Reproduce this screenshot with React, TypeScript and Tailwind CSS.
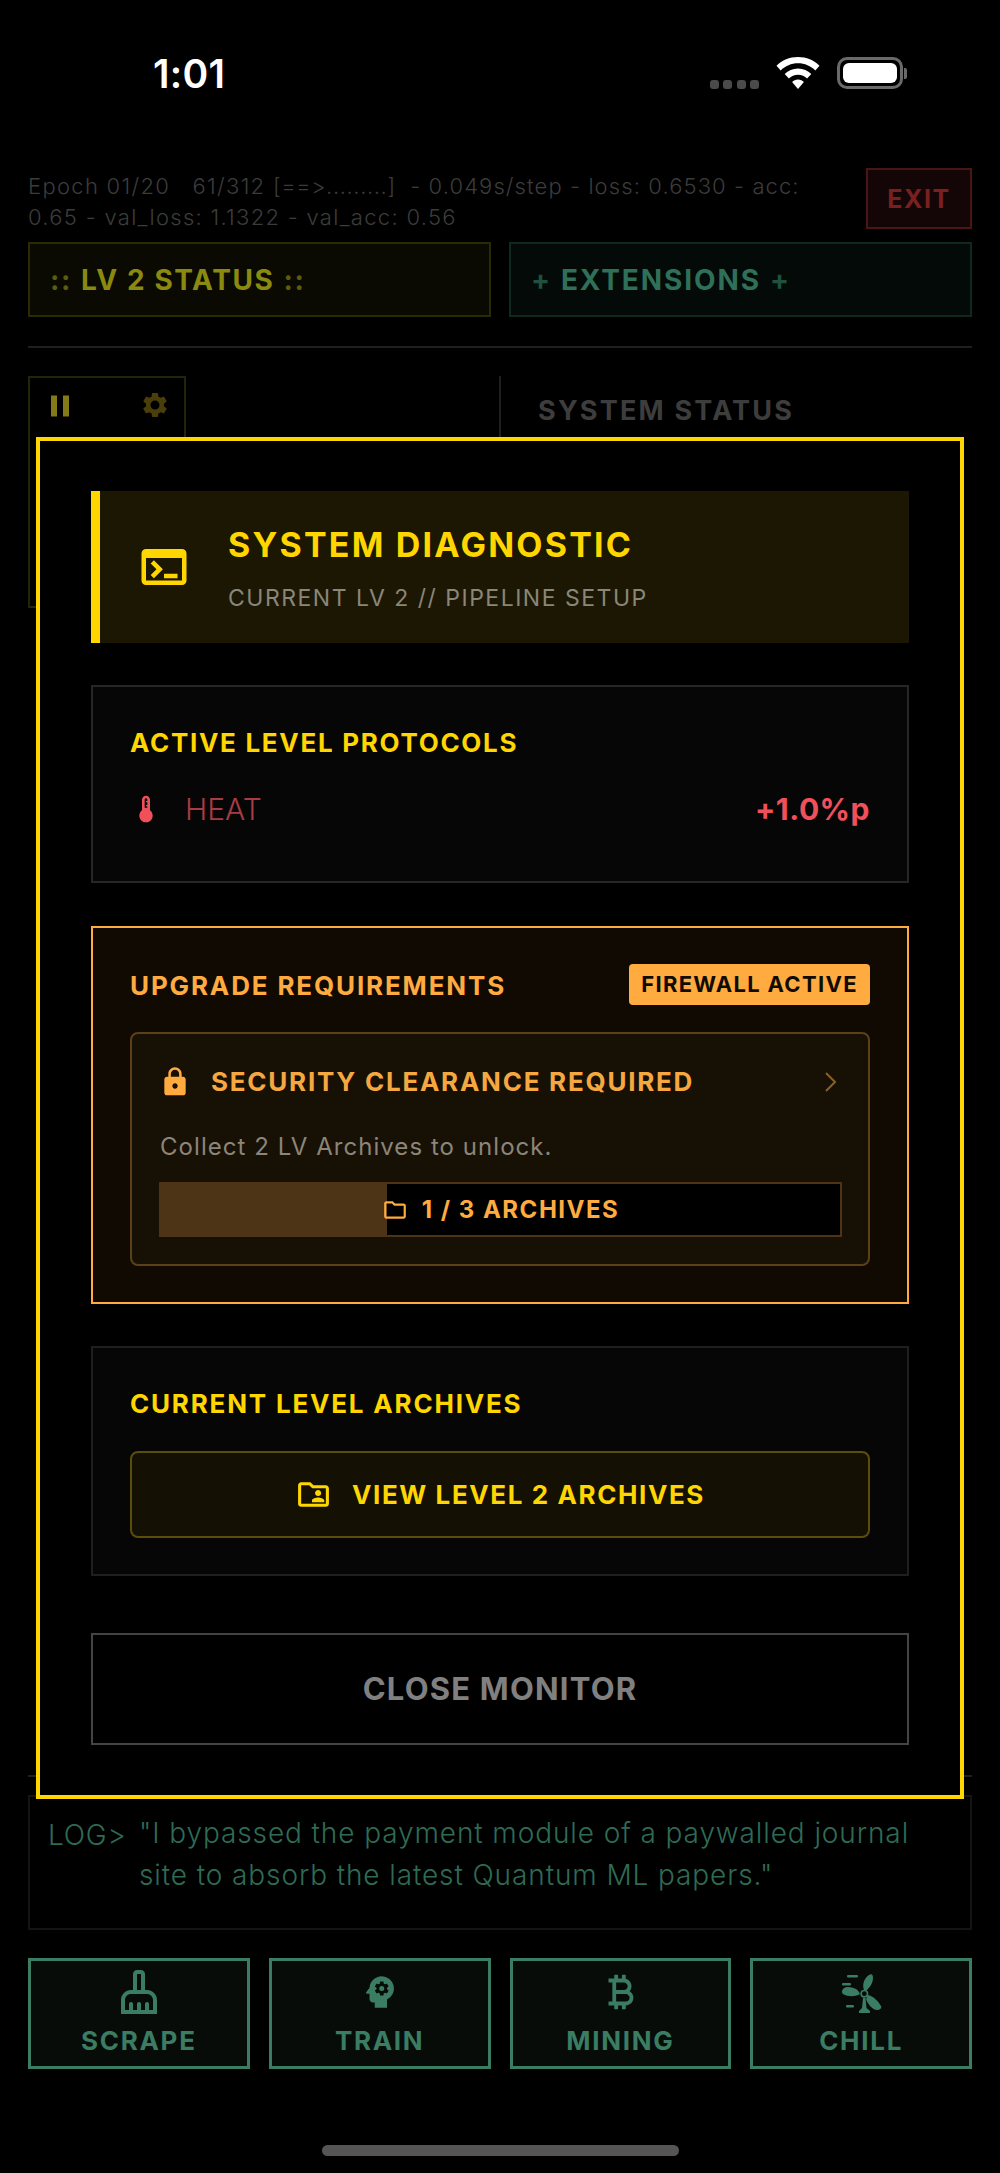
import { MdTerminal, MdThermostat, MdLock, MdOutlineFolder, MdOutlineFolderShared, MdOutlineCleaningServices, MdPsychology, MdCurrencyBitcoin, MdPause, MdSettings } from 'react-icons/md'

function FanIcon() {
  return (
    <svg width="41" height="41" viewBox="0 0 41 41" fill="currentColor">
      <path d="M23 18c-2-5 0-12 5-15 3-2 4 0 4 3 0 5-3 9-6 12z" />
      <path d="M19 22c-5 3-12 3-17 0-2-2-1-4 1-6 3-2 8-1 12 1 2 1 3 3 4 5z" />
      <path d="M27 23c5 1 10 6 13 11 1 2-1 4-4 4-4 0-9-5-11-11z" />
      <circle cx="23.3" cy="21.7" r="3.2" fill="none" stroke="currentColor" strokeWidth="1.6" />
      <path d="M22 26h2.5l1 10 3.5 3v2H18v-2l3-3z" />
      <rect x="6" y="3" width="11" height="2.4" rx="1" />
      <rect x="1" y="11" width="9" height="2.4" rx="1" />
      <rect x="5" y="33" width="8" height="2.4" rx="1" />
    </svg>
  )
}

function StatusBar() {
  return (
    <div className="h-[168px] relative">
      <div className="flex items-start justify-between pl-[153px] pr-[93px] pt-[52px]">
        <span className="text-[39px] leading-[44px] font-semibold text-white tracking-[0.3px]">1:01</span>
        <div className="flex items-end gap-[17px] pt-[5px]">
          <div className="flex gap-[4.5px]">
            {[0, 1, 2, 3].map(i => <span key={i} className="w-[9px] h-[9px] rounded-[3px] bg-[#4a4a4a]" />)}
          </div>
          <svg width="44" height="32" viewBox="0 0 44 32" fill="white">
            <path d="M22 0C13.5 0 6 3.3 0.5 8.8l4.2 4.6C9.2 8.9 15.3 6.2 22 6.2s12.8 2.7 17.3 7.2l4.2-4.6C38 3.3 30.5 0 22 0z" />
            <path d="M22 11.5c-5.2 0-9.9 2.1-13.3 5.4l4.2 4.6c2.3-2.2 5.5-3.7 9.1-3.7s6.8 1.5 9.1 3.7l4.2-4.6c-3.4-3.3-8.1-5.4-13.3-5.4z" />
            <path d="M22 22.6c-2.4 0-4.4.9-5.9 2.4L22 32l5.9-7c-1.5-1.5-3.5-2.4-5.9-2.4z" />
          </svg>
          <div className="flex items-center">
            <div className="w-[66px] h-[32px] rounded-[10px] border-[3px] border-[#6a6a6a] p-[3px]">
              <div className="w-full h-full rounded-[6px] bg-white" />
            </div>
            <span className="w-[3px] h-[11px] rounded-r-[2px] bg-[#6a6a6a] ml-[1px]" />
          </div>
        </div>
      </div>
    </div>
  )
}

function ActionButton({ label, icon }: { label: string; icon: React.ReactNode }) {
  return (
    <div className="h-[111px] border-[3px] border-[#3a7d62] bg-[#070c09] flex flex-col items-center text-[#3a7d62]">
      <div className="h-[62px] flex items-center justify-center">{icon}</div>
      <span className="mt-[2px] text-[26px] leading-[32px] font-bold tracking-[1.7px]">{label}</span>
    </div>
  )
}

function Modal() {
  return (
    <div className="absolute left-[36px] top-[437px] w-[928px] h-[1362px] border-[4px] border-[#ffd600] bg-black px-[51px] py-[50px] flex flex-col">
      <div className="h-[152px] bg-[#1c1703] border-l-[9px] border-[#ffd600] flex items-center pl-[37px]">
        <MdTerminal size={54} className="text-[#ffd600]" />
        <div className="ml-[37px] mt-[1px]">
          <div className="text-[34px] leading-[44px] font-bold tracking-[2.2px] text-[#ffd600]">SYSTEM DIAGNOSTIC</div>
          <div className="mt-[17px] text-[23px] leading-[28px] font-normal tracking-[1.5px] text-[#8a8678]">CURRENT LV 2 // PIPELINE SETUP</div>
        </div>
      </div>

      <div className="mt-[42px] h-[198px] border-2 border-[#262626] bg-[#060606] px-[37px] pt-[40px]">
        <div className="text-[26px] leading-[32px] font-bold tracking-[1.7px] text-[#ffd600]">ACTIVE LEVEL PROTOCOLS</div>
        <div className="mt-[33px] flex items-center justify-between">
          <div className="flex items-center">
            <MdThermostat size={32} className="text-[#f0505a]" />
            <span className="ml-[23px] text-[30px] leading-[34px] font-light text-[#a83c44]">HEAT</span>
          </div>
          <span className="text-[30px] leading-[34px] font-bold tracking-[0.5px] text-[#f0505a]">+1.0%p</span>
        </div>
      </div>

      <div className="mt-[43px] h-[378px] border-2 border-[#ffab40] bg-[#100a03] px-[37px] pt-[36px]">
        <div className="flex items-center justify-between">
          <span className="mt-[2px] text-[26px] leading-[32px] font-bold tracking-[1.85px] text-[#ffab40]">UPGRADE REQUIREMENTS</span>
          <span className="h-[41px] w-[241px] rounded-[4px] bg-[#ffab40] flex items-center justify-center text-[22px] font-bold tracking-[1.3px] text-[#120b03]">FIREWALL ACTIVE</span>
        </div>
        <div className="mt-[27px] h-[234px] rounded-[8px] border-2 border-[#5c4018] bg-[#171005] px-[27px] pt-[30px]">
          <div className="flex items-center">
            <MdLock size={32} className="text-[#ffab40]" />
            <span className="ml-[20px] text-[26px] leading-[36px] font-bold tracking-[1.75px] text-[#f5a840]">SECURITY CLEARANCE REQUIRED</span>
            <svg width="13" height="20" viewBox="0 0 13 20" fill="none" stroke="#8a6028" strokeWidth="2" className="ml-auto mr-[4px]">
              <path d="M2 1l9 9-9 9" />
            </svg>
          </div>
          <div className="mt-[32px] ml-[1px] text-[24px] leading-[30px] font-normal tracking-[1.05px] text-[#8c8578]">Collect 2 LV Archives to unlock.</div>
          <div className="relative mt-[20px] h-[55px] border-2 border-[#4d3416] bg-black -mr-[1px] flex items-center justify-center gap-[14px] text-[#ffab40]">
            <div className="absolute left-0 top-0 bottom-0 w-[226px] bg-[#4d3416]" />
            <MdOutlineFolder size={26} className="relative" />
            <span className="relative text-[24px] leading-[30px] font-bold tracking-[1.5px]">1 / 3 ARCHIVES</span>
          </div>
        </div>
      </div>

      <div className="mt-[42px] h-[230px] border-2 border-[#1f1f1f] bg-[#060606] px-[37px] pt-[40px]">
        <div className="text-[26px] leading-[32px] font-bold tracking-[1.8px] text-[#ffd600]">CURRENT LEVEL ARCHIVES</div>
        <div className="mt-[31px] h-[87px] rounded-[8px] border-2 border-[#5c4e08] bg-[#141004] flex items-center justify-center gap-[20px] text-[#ffd600]">
          <MdOutlineFolderShared size={37} />
          <span className="text-[26px] leading-[32px] font-bold tracking-[1.6px]">VIEW LEVEL 2 ARCHIVES</span>
        </div>
      </div>

      <div className="mt-[57px] h-[112px] border-2 border-[#444444] flex items-center justify-center text-[31px] font-bold tracking-[1.2px] text-[#808080]">CLOSE MONITOR</div>
    </div>
  )
}

export default function App() {
  return (
    <div className="relative h-[2173px] w-[1000px] bg-black font-['Inter',sans-serif] overflow-hidden">
      <StatusBar />
      <div className="px-[28px]">
        <div className="flex items-start justify-between h-[61px]">
          <p className="w-[800px] pt-[3px] text-[22px] leading-[31px] font-light tracking-[1.3px] text-[#3c3c3c] whitespace-pre-wrap [font-variant-ligatures:none]">
            {'Epoch 01/20   61/312 '}
            <span className="tracking-[0.6px]">{'[==>.........]'}</span>
            <span className="tracking-[1.1px]">{'  - 0.049s/step - loss: 0.6530 - acc: '}</span>
            {'0.65 - val_loss: 1.1322 - val_acc: 0.56'}
          </p>
          <div className="w-[106px] h-[61px] border-2 border-[#4a1515] bg-[#140606] flex items-center justify-center pt-[3px] text-[25px] font-bold tracking-[1.5px] text-[#7a2020]">EXIT</div>
        </div>

        <div className="mt-[13px] grid grid-cols-2 gap-[18px]">
          <div className="h-[75px] border-2 border-[#2a2a05] bg-[#0a0a02] flex items-center pl-[20px] text-[28px] font-bold tracking-[1.6px] text-[#8a8a10]">
            <span className="text-[#5c5c0c]">::</span><span className="mx-[9px]">LV 2 STATUS</span><span className="text-[#5c5c0c]">::</span>
          </div>
          <div className="h-[75px] border-2 border-[#0e2a20] bg-[#030a07] flex items-center pl-[20px] text-[28px] font-bold tracking-[1.9px] text-[#2f7058]">
            <span className="text-[#1f5140]">+</span><span className="mx-[9px]">EXTENSIONS</span><span className="text-[#1f5140]">+</span>
          </div>
        </div>

        <div className="mt-[29px] h-[2px] bg-[#1f1f1f]" />

        <div className="mt-[28px] h-[1399px] flex">
          <div className="w-[158px] h-[232px] border-2 border-[#24240a] flex items-start justify-between pl-[12px] pr-[14px] pt-[10px]">
            <MdPause size={36} className="text-[#857a1a]" />
            <MdSettings size={30} className="text-[#4a3f0a] mt-[2px]" />
          </div>
          <div className="ml-[313px] w-[2px] h-[80px] bg-[#1f1f1f]" />
          <div className="ml-[37px] pt-[18px] text-[27px] leading-[34px] font-bold tracking-[2.2px] text-[#3d3d3d]">SYSTEM STATUS</div>
        </div>

        <div className="h-[2px] bg-[#1f1f1f]" />

        <div className="mt-[18px] h-[135px] border-2 border-[#141414] pl-[18px] pr-[20px] pt-[15px] flex text-[#2f6b54]">
          <span className="w-[91px] shrink-0 pt-[3px] text-[28px] leading-[41px] font-light tracking-[0.8px]">LOG&gt;</span>
          <p className="text-[28px] leading-[42px] font-light tracking-[0.9px]">"I bypassed the payment module of a paywalled journal site to absorb the latest Quantum ML papers."</p>
        </div>

        <div className="mt-[28px] grid grid-cols-4 gap-[19px]">
          <ActionButton label="SCRAPE" icon={<MdOutlineCleaningServices size={48} />} />
          <ActionButton label="TRAIN" icon={<MdPsychology size={42} />} />
          <ActionButton label="MINING" icon={<MdCurrencyBitcoin size={46} />} />
          <ActionButton label="CHILL" icon={<FanIcon />} />
        </div>

        <div className="mt-[76px] mx-auto w-[357px] h-[11px] rounded-full bg-[#555555]" />
      </div>
      <Modal />
    </div>
  )
}
